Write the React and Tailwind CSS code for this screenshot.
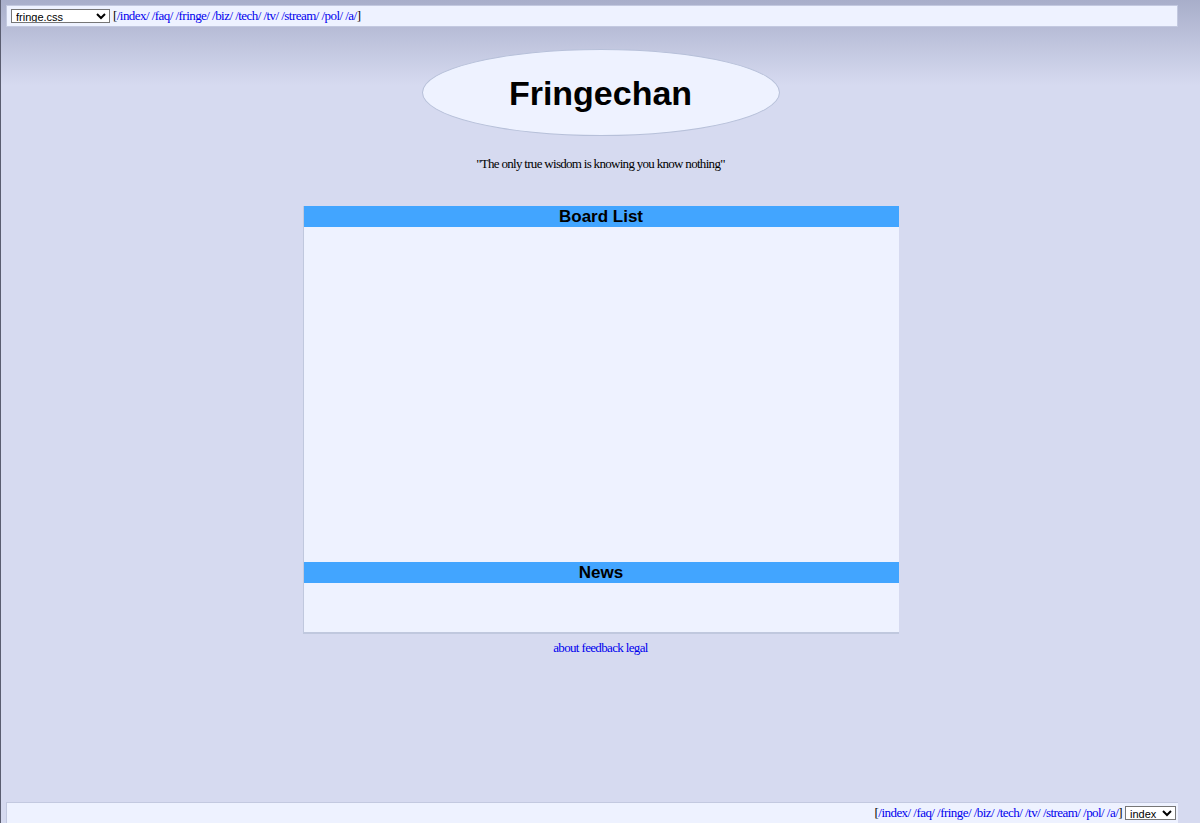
import React from 'react';

const boards = ['index', 'faq', 'fringe', 'biz', 'tech', 'tv', 'stream', 'pol', 'a'];

const BoardLinks = () => (
  <span className="text-[13px] tracking-[-0.55px] text-black" style={{ fontFamily: '"Liberation Serif", serif' }}>
    [
    {boards.map((b, i) => (
      <React.Fragment key={b}>
        <a href="#" className="text-[#0000ee]">/{b}/</a>
        {i < boards.length - 1 ? ' ' : ''}
      </React.Fragment>
    ))}
    ]
  </span>
);

const Picker = ({ value, width }) => (
  <select
    defaultValue={value}
    className={`${width} h-[14px] bg-white border border-[#767676] text-[11px] leading-none p-0 text-black rounded-none align-middle`}
    style={{ fontFamily: '"Liberation Sans", Arial, sans-serif' }}
  >
    <option value={value}>{value}</option>
  </select>
);

const SectionHead = ({ children }) => (
  <div
    className="h-[21px] bg-[#42a5ff] text-center text-[17px] font-bold leading-[21px] text-black"
    style={{ fontFamily: '"Liberation Sans", Arial, sans-serif' }}
  >
    {children}
  </div>
);

export default function App() {
  return (
    <div
      className="h-[823px] overflow-hidden flex flex-col border-l border-[#5a5d70] bg-[#d6daf0] bg-[linear-gradient(to_bottom,#a8aeca_0px,#d6daf0_85px)] bg-no-repeat"
      style={{ fontFamily: '"Liberation Serif", serif' }}
    >
      {/* barre du haut */}
      <div className="ml-[5px] mt-[5px] w-[1172px] h-[22px] flex items-center gap-[3px] px-[4px] bg-[#eef2ff] border border-[#c3c9e0]">
        <Picker value="fringe.css" width="w-[99px]" />
        <BoardLinks />
      </div>

      {/* logo */}
      <div className="mt-[22px] flex justify-center">
        <div className="w-[358px] h-[87px] rounded-[50%] bg-[#eef2ff] border border-[#b7c0d9] flex items-center justify-center">
          <span
            className="text-[34px] font-bold text-black leading-none"
            style={{ fontFamily: '"Liberation Sans", Arial, sans-serif' }}
          >
            Fringechan
          </span>
        </div>
      </div>

      <div className="mt-[18px] text-center text-[13px] tracking-[-0.7px] text-black">
        "The only true wisdom is knowing you know nothing"
      </div>

      {/* boîte principale */}
      <div className="mt-[32px] mx-auto w-[596px] bg-[#eef2ff] border-l border-b-2 border-[#c0c8de]">
        <SectionHead>Board List</SectionHead>
        <div className="h-[335px]" />
        <SectionHead>News</SectionHead>
        <div className="h-[49px]" />
      </div>

      <div className="mt-[4px] text-center text-[13px] tracking-[-0.65px]">
        <a href="#" className="text-[#0000ee]">about</a>{' '}
        <a href="#" className="text-[#0000ee]">feedback</a>{' '}
        <a href="#" className="text-[#0000ee]">legal</a>
      </div>

      {/* barre du bas */}
      <div className="mt-auto ml-[5px] w-[1172px] h-[21px] flex items-center justify-end gap-[3px] px-[2px] bg-[#eef2ff] border-t border-l border-[#c3c9e0]">
        <BoardLinks />
        <Picker value="index" width="w-[51px]" />
      </div>
    </div>
  );
}
